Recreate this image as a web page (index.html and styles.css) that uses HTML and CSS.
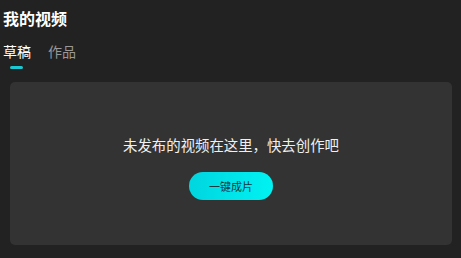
FILE: index.html
```html
<!DOCTYPE html>
<html lang="zh-CN">
<head>
    <meta charset="UTF-8">
    <meta name="viewport" content="width=device-width, initial-scale=1.0">
    <title>我的视频</title>
    <link rel="stylesheet" href="styles.css">
</head>
<body>
    <h1 class="title">我的视频</h1>
    <div class="tabs">
        <div class="tab active">草稿</div>
        <div class="tab">作品</div>
    </div>
    <div class="card">
        <p class="empty-text">未发布的视频在这里，快去创作吧</p>
        <button class="make-btn">一键成片</button>
    </div>
</body>
</html>
```

FILE: styles.css
```css
html, body {
    margin: 0;
    background: #222222;
}
body {
    font-family: "Noto Sans CJK SC", "Noto Sans", sans-serif;
    color: #ffffff;
    padding: 0 9px 13px 3px;
    height: 258px;
    box-sizing: border-box;
    display: flex;
    flex-direction: column;
}
.title {
    margin: 0;
    padding-top: 6px;
    font-size: 16px;
    font-weight: bold;
    line-height: 24px;
}
.tabs {
    display: flex;
    gap: 17px;
    margin-top: 11px;
}
.tab {
    position: relative;
    font-size: 14px;
    line-height: 20px;
    color: #999999;
    padding-bottom: 8px;
}
.tab.active {
    color: #ffffff;
}
.tab.active::after {
    content: "";
    position: absolute;
    left: 7px;
    bottom: 0;
    width: 13px;
    height: 3px;
    border-radius: 2px;
    background: #19c8d2;
}
.card {
    flex: 1;
    margin: 13px 0 0 7px;
    background: #333333;
    border-radius: 5px;
    display: flex;
    flex-direction: column;
    align-items: center;
    justify-content: center;
    padding-top: 7px;
}
.empty-text {
    margin: 0;
    font-size: 14.4px;
    line-height: 20px;
    color: #f0f0f0;
}
.make-btn {
    margin-top: 17px;
    width: 84px;
    height: 28px;
    border: none;
    border-radius: 14px;
    background: linear-gradient(90deg, #00d6df, #00f2f2);
    color: #153a40;
    font-family: "Noto Sans CJK SC", sans-serif;
    font-size: 11px;
    padding: 0;
}
```
